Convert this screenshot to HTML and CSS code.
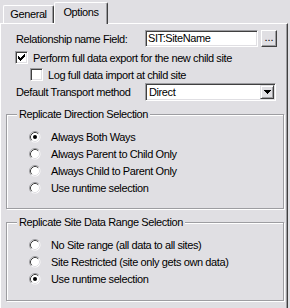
FILE: index.html
```html
<!DOCTYPE html>
<html>
<head>
<meta charset="utf-8">
<link rel="stylesheet" href="styles.css">
</head>
<body>
<div class="tabs">
  <div class="tab">General</div>
  <div class="tab active">Options</div>
</div>
<div class="panel">
  <div class="fields">
    <div class="field-row">
      <span class="label">Relationship name Field:</span>
      <div class="textbox">SIT:SiteName</div>
      <div class="button">...</div>
    </div>
    <div class="check-row">
      <span class="checkbox"><svg width="9" height="9" viewBox="0 0 9 9"><path transform="translate(1 1)" d="M6 0h1v1h-1z M5 1h2v1h-2z M0 2h1v1h-1z M4 2h3v1h-3z M0 3h2v1h-2z M3 3h3v1h-3z M0 4h5v1h-5z M1 5h3v1h-3z M2 6h1v1h-1z" fill="#000"/></svg></span>
      <span>Perform full data export for the new child site</span>
    </div>
    <div class="check-row indent">
      <span class="checkbox"></span>
      <span>Log full data import at child site</span>
    </div>
    <div class="field-row combo-row">
      <span class="label">Default Transport method</span>
      <div class="combo">
        <span class="combo-text">Direct</span>
        <span class="combo-btn"><svg width="7" height="4" viewBox="0 0 7 4"><path d="M0 0h7v1h-7z M1 1h5v1h-5z M2 2h3v1h-3z M3 3h1v1h-1z" fill="#000"/></svg></span>
      </div>
    </div>
  </div>

  <fieldset class="group">
    <legend>Replicate Direction Selection</legend>
    <div class="radios">
      <div class="radio-row">
        <svg class="radio" width="12" height="12" viewBox="0 0 12 12"><circle cx="6" cy="6" r="5.5" fill="#fff"/><path d="M2.11 9.89A5.5 5.5 0 0 1 9.89 2.11" fill="none" stroke="#9d9da1"/><path d="M2.82 9.18A4.5 4.5 0 0 1 9.18 2.82" fill="none" stroke="#404040"/><path d="M9.18 2.82A4.5 4.5 0 0 1 2.82 9.18" fill="none" stroke="#e0dfe3"/><circle cx="6" cy="6" r="2" fill="#000"/></svg>
        <span>Always Both Ways</span>
      </div>
      <div class="radio-row">
        <svg class="radio" width="12" height="12" viewBox="0 0 12 12"><circle cx="6" cy="6" r="5.5" fill="#fff"/><path d="M2.11 9.89A5.5 5.5 0 0 1 9.89 2.11" fill="none" stroke="#9d9da1"/><path d="M2.82 9.18A4.5 4.5 0 0 1 9.18 2.82" fill="none" stroke="#404040"/><path d="M9.18 2.82A4.5 4.5 0 0 1 2.82 9.18" fill="none" stroke="#e0dfe3"/></svg>
        <span>Always Parent to Child Only</span>
      </div>
      <div class="radio-row">
        <svg class="radio" width="12" height="12" viewBox="0 0 12 12"><circle cx="6" cy="6" r="5.5" fill="#fff"/><path d="M2.11 9.89A5.5 5.5 0 0 1 9.89 2.11" fill="none" stroke="#9d9da1"/><path d="M2.82 9.18A4.5 4.5 0 0 1 9.18 2.82" fill="none" stroke="#404040"/><path d="M9.18 2.82A4.5 4.5 0 0 1 2.82 9.18" fill="none" stroke="#e0dfe3"/></svg>
        <span>Always Child to Parent Only</span>
      </div>
      <div class="radio-row">
        <svg class="radio" width="12" height="12" viewBox="0 0 12 12"><circle cx="6" cy="6" r="5.5" fill="#fff"/><path d="M2.11 9.89A5.5 5.5 0 0 1 9.89 2.11" fill="none" stroke="#9d9da1"/><path d="M2.82 9.18A4.5 4.5 0 0 1 9.18 2.82" fill="none" stroke="#404040"/><path d="M9.18 2.82A4.5 4.5 0 0 1 2.82 9.18" fill="none" stroke="#e0dfe3"/></svg>
        <span>Use runtime selection</span>
      </div>
    </div>
  </fieldset>

  <fieldset class="group group-range">
    <legend>Replicate Site Data Range Selection</legend>
    <div class="radios">
      <div class="radio-row">
        <svg class="radio" width="12" height="12" viewBox="0 0 12 12"><circle cx="6" cy="6" r="5.5" fill="#fff"/><path d="M2.11 9.89A5.5 5.5 0 0 1 9.89 2.11" fill="none" stroke="#9d9da1"/><path d="M2.82 9.18A4.5 4.5 0 0 1 9.18 2.82" fill="none" stroke="#404040"/><path d="M9.18 2.82A4.5 4.5 0 0 1 2.82 9.18" fill="none" stroke="#e0dfe3"/></svg>
        <span>No Site range (all data to all sites)</span>
      </div>
      <div class="radio-row">
        <svg class="radio" width="12" height="12" viewBox="0 0 12 12"><circle cx="6" cy="6" r="5.5" fill="#fff"/><path d="M2.11 9.89A5.5 5.5 0 0 1 9.89 2.11" fill="none" stroke="#9d9da1"/><path d="M2.82 9.18A4.5 4.5 0 0 1 9.18 2.82" fill="none" stroke="#404040"/><path d="M9.18 2.82A4.5 4.5 0 0 1 2.82 9.18" fill="none" stroke="#e0dfe3"/></svg>
        <span>Site Restricted (site only gets own data)</span>
      </div>
      <div class="radio-row">
        <svg class="radio" width="12" height="12" viewBox="0 0 12 12"><circle cx="6" cy="6" r="5.5" fill="#fff"/><path d="M2.11 9.89A5.5 5.5 0 0 1 9.89 2.11" fill="none" stroke="#9d9da1"/><path d="M2.82 9.18A4.5 4.5 0 0 1 9.18 2.82" fill="none" stroke="#404040"/><path d="M9.18 2.82A4.5 4.5 0 0 1 2.82 9.18" fill="none" stroke="#e0dfe3"/><circle cx="6" cy="6" r="2" fill="#000"/></svg>
        <span>Use runtime selection</span>
      </div>
    </div>
  </fieldset>
</div>
</body>
</html>
```

FILE: styles.css
```css
* { box-sizing: border-box; }
html, body { margin: 0; padding: 0; }
body {
  background: #e0dfe3;
  font-family: "Liberation Sans", Arial, sans-serif;
  font-size: 11px;
  letter-spacing: -0.4px;
  color: #000;
  width: 290px;
  height: 308px;
  overflow: hidden;
}
.tabs {
  display: flex;
  align-items: flex-end;
  height: 23px;
  padding-left: 3px;
  position: relative;
  z-index: 1;
}
.tab {
  width: 51px;
  height: 18px;
  border: 1px solid;
  border-bottom: 0;
  border-color: #fff #404040 #fff #fff;
  box-shadow: inset -1px 0 0 #9d9da1;
  border-radius: 2px 2px 0 0;
  text-align: center;
  line-height: 13px;
  padding-top: 2px;
  background: #e0dfe3;
}
.tab.active {
  width: 54px;
  height: 22px;
  margin-bottom: -1px;
  padding-top: 3px;
}
.panel {
  width: 288px;
  height: 300px;
  border: 1px solid;
  border-color: #fff #404040 #404040 #fff;
  box-shadow: inset -1px 0 0 #9d9da1;
}
.fields {
  padding: 6px 0 0 14px;
}
.field-row {
  display: flex;
  align-items: center;
  height: 17px;
}
.label {
  width: 130px;
  padding-left: 1px;
  white-space: nowrap;
}
.textbox {
  width: 113px;
  height: 17px;
  background: #fff;
  border: 1px solid;
  border-color: #9d9da1 #fff #fff #9d9da1;
  box-shadow: inset 1px 1px 0 #404040, inset -1px -1px 0 #e0dfe3;
  padding-left: 2px;
  line-height: 15px;
}
.button {
  width: 16px;
  height: 17px;
  margin-left: 3px;
  border: 1px solid;
  border-color: #fff #404040 #404040 #fff;
  box-shadow: inset -1px -1px 0 #9d9da1;
  text-align: center;
  line-height: 12px;
  letter-spacing: 0;
}
.check-row {
  display: flex;
  align-items: center;
  height: 17px;
  margin-top: 2px;
}
.check-row.indent {
  margin-top: 0;
  padding-left: 15px;
}
.checkbox {
  width: 13px;
  height: 13px;
  margin-right: 5px;
  background: #fff;
  border: 1px solid;
  border-color: #9d9da1 #fff #fff #9d9da1;
  box-shadow: inset 1px 1px 0 #404040, inset -1px -1px 0 #e0dfe3;
  display: flex;
  align-items: center;
  justify-content: center;
  flex: none;
}
.combo-row {
  height: 18px;
}
.combo {
  width: 131px;
  height: 18px;
  display: flex;
  background: #fff;
  border: 1px solid;
  border-color: #9d9da1 #fff #fff #9d9da1;
  box-shadow: inset 1px 1px 0 #404040, inset -1px -1px 0 #e0dfe3;
  padding: 1px 1px 1px 1px;
}
.combo-text {
  flex: 1;
  padding-left: 2px;
  line-height: 14px;
}
.combo-btn {
  width: 14px;
  height: 14px;
  background: #e0dfe3;
  border: 1px solid;
  border-color: #e0dfe3 #404040 #404040 #e0dfe3;
  box-shadow: inset 1px 1px 0 #fff, inset -1px -1px 0 #9d9da1;
  display: flex;
  align-items: center;
  justify-content: center;
}
.group {
  margin: 7px 3px 0 5px;
  padding: 0;
  border: 1px solid #9d9da1;
  box-shadow: inset 1px 1px 0 #fff, 1px 1px 0 #fff;
  min-width: 0;
}
.group legend {
  margin-left: 10px;
  padding: 0 2px;
  line-height: 13px;
  background: #e0dfe3;
}
.radios {
  padding: 7px 0 12px 22px;
}
.group-range .radios {
  padding-bottom: 13px;
}
.radio-row {
  display: flex;
  align-items: center;
  height: 17px;
}
.radio {
  flex: none;
  margin-right: 10px;
}
```
